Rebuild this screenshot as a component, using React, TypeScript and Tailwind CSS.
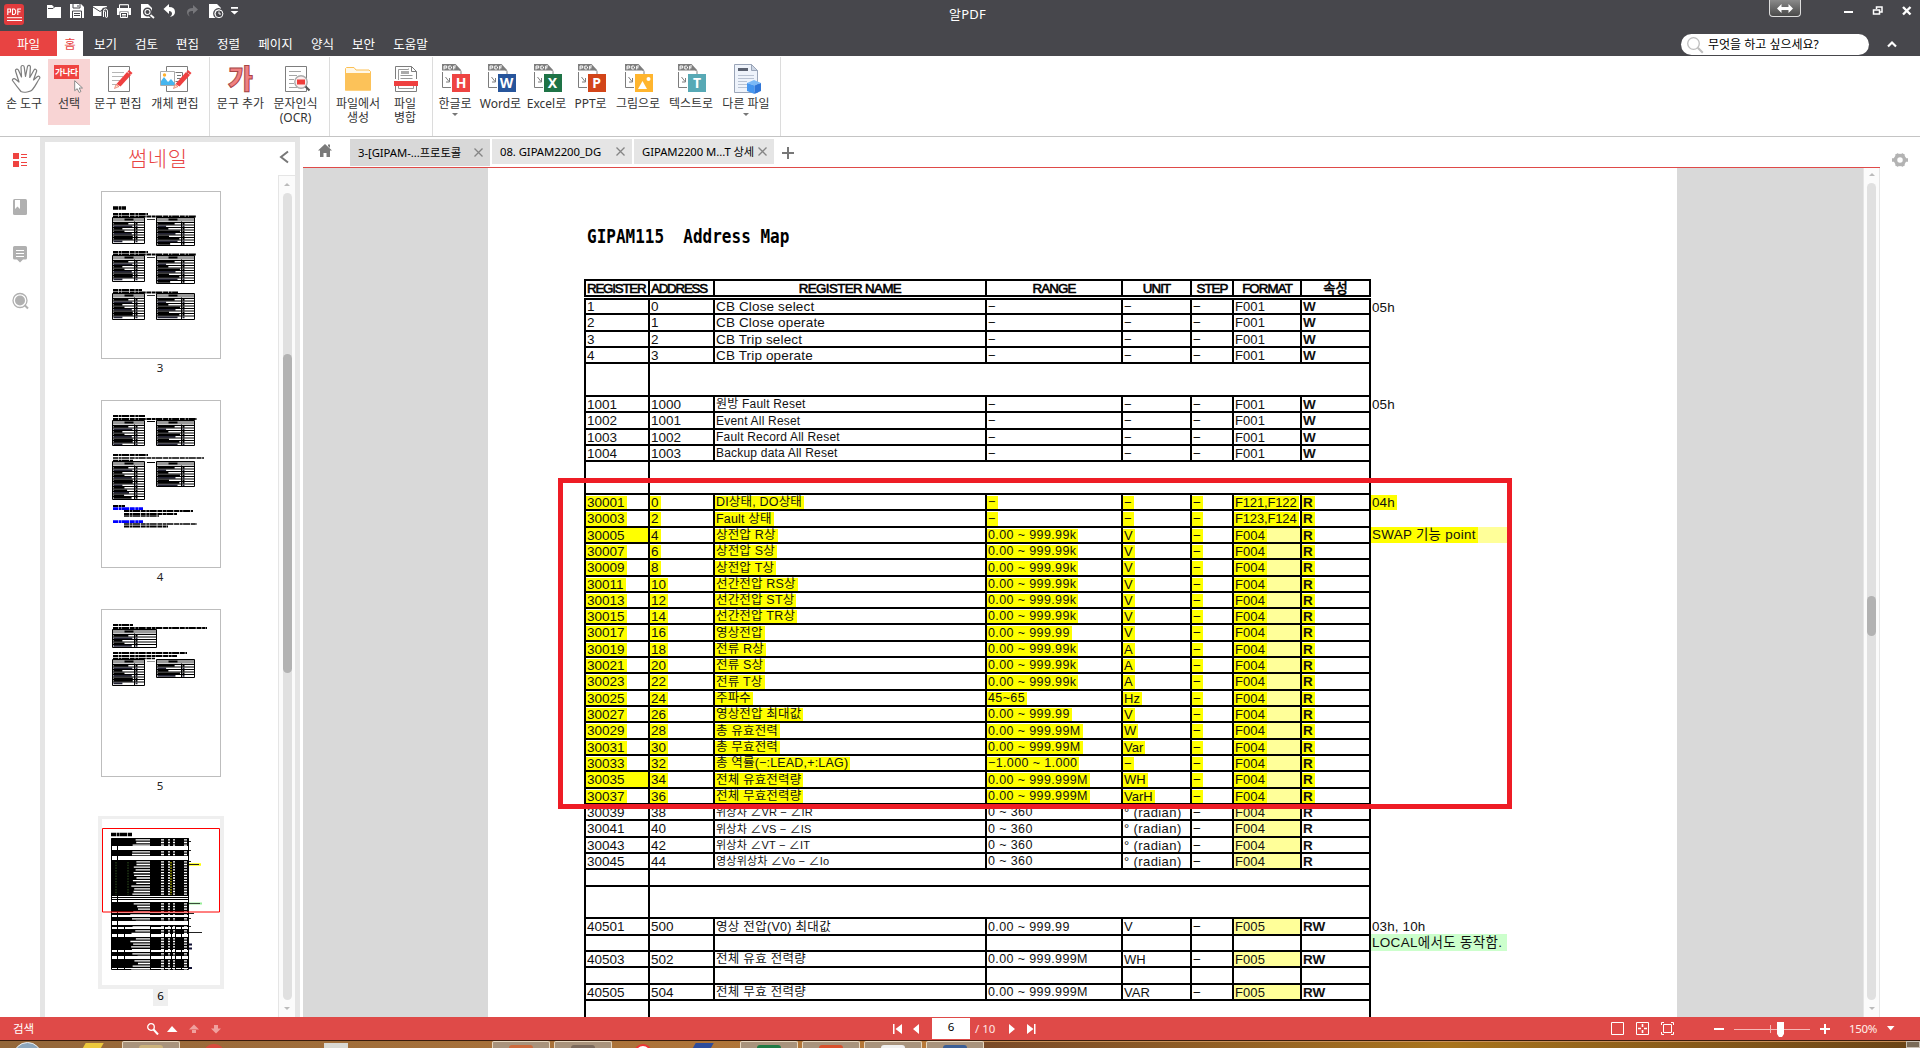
import React from "react";

const UI = "font-['Noto_Sans','Noto_Sans_CJK_KR',sans-serif]";
const DOC = "font-['Liberation_Sans','Noto_Sans_CJK_KR',sans-serif]";

/* ---------- quick access icons ---------- */

function QuickIcons() {
  const w = "#fff";
  return (
    <div className="flex items-center h-[23px] pl-[23px] gap-[8px]">
      <svg width="15" height="15" viewBox="0 0 15 15"><path d="M0 1h5l2 2h7v11H0z" fill={w} /><path d="M1 4.5h5l2-2" stroke="#47474c" fill="none" /></svg>
      <svg width="15" height="15" viewBox="0 0 15 15"><path d="M0 0h11l3 3v11H0z" fill={w} /><path d="M3 0v4h7V0M2.500 14V7h9v7M4 9.500h6M4 11.500h6" stroke="#47474c" fill="none" /><path d="M8 1v2" stroke="#47474c" /></svg>
      <svg width="16" height="15" viewBox="0 0 16 15"><path d="M0 2h14v10H0z" fill={w} /><path d="M0 3l7 4.500L14 3" stroke="#47474c" fill="none" /><path d="M10 14V7q0-2 2-2t2 2v5q0 2-1.500 2T11.500 12V8" stroke="#47474c" strokeWidth="3" fill="none" /><path d="M10.500 13V7q0-2 2-2t2 2v5q0 1.500-1 1.500T12.500 12V8" stroke={w} fill="none" /></svg>
      <svg width="15" height="15" viewBox="0 0 15 15"><path d="M2.500 4V.5h9V4M0 4h14v7h-2.500V7.500h-9V11H0z" fill={w} /><path d="M3 1h8v3H3z" fill="#47474c" /><path d="M3.500 8.500h7v5h-7zM5 10.500h4M5 12h4M2.500 4V.8h9V4" stroke={w} fill="none" /></svg>
      <svg width="15" height="15" viewBox="0 0 15 15"><path d="M1 0h7l4 4v10H1z" fill={w} /><circle cx="7.500" cy="8" r="3.800" fill="#fff" stroke="#47474c" strokeWidth="1.500" /><circle cx="7.500" cy="8" r="2" fill="#47474c" /><path d="M10 10.500l4 4" stroke="#47474c" strokeWidth="4" /><path d="M10.500 11l3.500 3" stroke={w} strokeWidth="1.800" /></svg>
      <svg width="15" height="15" viewBox="0 0 15 15"><path d="M6 0v3q6 0 6 5 0 4-5 5 2.500-2 2-4T6 7v3L.5 5z" fill={w} /></svg>
      <svg width="15" height="15" viewBox="0 0 15 15"><path d="M7 1l5 4.500L7 10V7Q2.500 6.500 2.500 9.500q0 1.500 1.500 3Q1 11 1 8q.3-4 6-4z" fill="#77777b" /></svg>
      <svg width="16" height="15" viewBox="0 0 16 15"><path d="M0 0h8l4 4v10H0z" fill={w} /><circle cx="9.500" cy="9.500" r="4.700" fill={w} stroke="#47474c" strokeWidth="1.400" /><circle cx="10" cy="9.800" r="3.900" fill="#47474c" stroke={w} /><path d="M10 7.500v2.500h2" stroke={w} fill="none" /></svg>
      <svg className="ml-[-3px]" width="9" height="15" viewBox="0 0 9 15"><path d="M1 3h7v1.700H1zM.6 7H8.400L4.500 10.500z" fill={w} /></svg>
    </div>
  );
}

function AppLogo() {
  return (
    <div className="ml-[4px] mt-[4px] flex h-[21px] w-[20px] flex-col items-center rounded-[3px] bg-[#e23b3d] pt-[4px]">
      <svg width="15" height="14" viewBox="0 0 15 14" fill="none" stroke="#fff" strokeWidth="1.100">
        <path d="M.8 7V1h2.700v3H1M5.500 1v5.500h1.800L8.600 5V2.500L7.300 1zM10.800 7V1H14M10.800 3.800h2.700" />
        <path d="M0 9.700h15M0 12.500h15" strokeWidth="1" />
      </svg>
    </div>
  );
}

/* ---------- ribbon icons ---------- */

const Pencil = () => (
  <g>
    <path d="M10.500 19L21 7l4 3L14.500 21.500z" fill="#ef4040" />
    <path d="M21.500 6.500l1.500-1.500 3.500 3-1.500 1.700z" fill="#ef4040" />
    <path d="M10 19.500L8.500 23.500l4.500-2z" fill="#ffe0c8" stroke="#e06050" strokeWidth=".6" />
  </g>
);

const icons: Record<string, React.ReactNode> = {
  hand: (
    <svg className="ml-[3px]" width="30" height="30" viewBox="0 0 30 30" fill="none" stroke="#7d7d7d" strokeWidth="1.200" strokeLinejoin="round">
      <path d="M10 27.500C7 24 4 20 1.500 16.500c-.5-1.500 1.500-2.500 3-1.300L8 18 4.500 7c-.3-2 2.200-2.700 3-.8L10.500 13 10 3c.2-2 3-2 3.200 0L14.500 12.500 16.500 2.500c.5-1.700 3-1.300 2.900.5L18.800 13.500 23 6c1-1.500 3-.5 2.600 1.300L22.500 16l4-3.500c1.500-1 3 .6 2 2C26 18 24.500 22 21.500 25.500c-1.500 2.500-9 3.500-11.500 2z" />
    </svg>
  ),
  select: (
    <div className="relative h-[30px] w-[30px]">
      <div className="mt-px h-[14px] w-[25px] whitespace-nowrap bg-[#ef4340] text-center text-[8.500px] font-bold leading-[13px] tracking-[-0.100px] text-white">가나다</div>
      <svg className="absolute left-[20px] top-[16px]" width="10" height="13" viewBox="0 0 10 13"><path d="M.7.700v10l2.500-2 2 3.800 1.700-1-1.700-3.500h3.300z" fill="#fff" stroke="#888" /></svg>
    </div>
  ),
  edit: (
    <svg className="ml-[3px]" width="28" height="28" viewBox="0 0 28 28"><path d="M2.500 1.500h21v25h-21z" fill="#fff" stroke="#7d7d7d" /><path d="M6 7.500h12M6 11.500h11M6 15.500h8M6 19.500h5" stroke="#b5b5b5" /><Pencil /></svg>
  ),
  object: (
    <svg className="ml-[2px]" width="34" height="28" viewBox="0 0 34 28"><path d="M7.500 1.500h21v25h-21z" fill="#fff" stroke="#7d7d7d" /><path d="M1.500 6.500h14v14h-14z" fill="#fff" stroke="#aaa" /><path d="M18 10.500h4M18 13.500h4M16.500 7.500h7v9h-7" stroke="#777" fill="none" /><path d="M2 20v-4l3-4 4 5 3-3 3.500 4v2z" fill="#46b5ee" /><circle cx="5.500" cy="10" r="1.700" fill="#ffb02c" /><g transform="translate(6 0)"><Pencil /></g></svg>
  ),
  ga: (
    <div className="flex h-[28px] items-center text-[27px] font-black leading-[28px] text-[#f08080] [-webkit-text-stroke:1px_#a64646]">가</div>
  ),
  ocr: (
    <svg className="ml-[2px]" width="28" height="28" viewBox="0 0 28 28"><path d="M2.500 1.500h21v25h-21z" fill="#fff" stroke="#7d7d7d" /><path d="M6 6.500h12M6 10.500h8M6 14.500h5M6 18.500h5M6 22.500h8" stroke="#a5a5a5" /><circle cx="18" cy="17" r="6.200" fill="#fbeeee" stroke="#ababab" strokeWidth="1.400" /><path d="M14 14.500h8v5h-8z" fill="#ef3d3a" /><path d="M22.500 21.500l4 4" stroke="#555" strokeWidth="2.200" /></svg>
  ),
  folder: (
    <svg width="28" height="28" viewBox="0 0 28 28"><path d="M1.500 25V3.500l1-1H10l2 2.500h13l1.500 1.500V25z" fill="#fff8e8" stroke="#fcc055" /><path d="M1 8h26v17.500H1z" fill="#fcc259" /></svg>
  ),
  merge: (
    <svg className="ml-[2px]" width="28" height="28" viewBox="0 0 28 28"><path d="M3.500 14V1.500h16l5 5V14M3.500 20v6.500h21V20M19.500 1.500v5h5" fill="none" stroke="#7d7d7d" /><path d="M6.500 15V4.500h10v-1M6.500 20v3.500h15V20M8.500 10.500h12M8.500 13.500h12" fill="none" stroke="#999" /><path d="M9 6h8v3H9z" fill="#aaa" /><path d="M2 16h24v5H2z" fill="#ef4040" /></svg>
  ),
  cube: (
    <svg className="ml-[2px]" width="28" height="32" viewBox="0 0 28 32"><path d="M1.500 1.500h17l6 6v22h-23z" fill="#eef3fb" stroke="#9aa5b8" /><path d="M18.500 1.500v6h6z" fill="#cdd6e4" stroke="#9aa5b8" /><path d="M5 5h10v3H5z" fill="#5a6170" /><path d="M5 12.500h16M5 15.500h16M5 18.500h9M5 21.500h9M5 24.500h9" stroke="#b9c3d3" /><path d="M14 20l7-3 7 3-6.500 2.500z" fill="#7ab9f7" /><path d="M14 20l7.500 2.500V31L14 28z" fill="#4596ef" /><path d="M21.500 22.500L28 20v8l-6.500 3z" fill="#2f76d8" /></svg>
  ),
};

function ExportIcon({ color, letter }: { color: string; letter?: string }) {
  return (
    <div className="relative ml-[3px] mt-[-2px] h-[30px] w-[29px]">
      <svg width="29" height="30" viewBox="0 0 29 30" fill="none" stroke="#7d7d7d">
        <path d="M.5 9v15.500H9M13 2.500l6 6V11" />
        <path d="M0 1h13.500l6 6.500H0z" fill="#7d7d7d" stroke="none" />
        <path d="M2 6.500V3h2.700v2H2M6.800 3v3h1.700l1-.9V3.900L8.500 3zM11.700 6.500V3H14M11.700 4.800h1.800" stroke="#fff" />
        <path d="M3.500 14l3.500 4.500M7.500 15v4H4" />
        <path d="M10 11h18v18H10z" fill={color} stroke="none" />
        {!letter && <path d="M13 26l4.500-8 4.500 8z" fill="#fff" stroke="none" />}
        {!letter && <circle cx="23.500" cy="16" r="2" fill="#fff" stroke="none" />}
      </svg>
      {letter && <span className="absolute left-[10px] top-[11px] w-[18px] text-center font-['Noto_Sans'] text-[14px] font-bold leading-[18px] text-white">{letter}</span>}
    </div>
  );
}

function Tool({ w, icon, label, arrow, on }: { w: string; icon: React.ReactNode; label: string[]; arrow?: boolean; on?: boolean }) {
  return (
    <div className={`${w} ${on ? "bg-[#f8d4d4]" : ""} mt-[3px] flex h-[66px] shrink-0 flex-col items-center whitespace-nowrap text-[12px] leading-[14px] text-[#333]`}>
      <div className="flex h-[38px] items-center pt-[2px]">{icon}</div>
      {label.map((l) => <div key={l}>{l}</div>)}
      {arrow && <div className="mt-[2px] h-0 w-0 border-x-[3px] border-t-[3px] border-x-transparent border-t-[#777]" />}
    </div>
  );
}

const Sep = ({ m }: { m: string }) => <div className={`${m} mt-[1px] h-[79px] w-px shrink-0 bg-[#dcdcdc]`} />;

function Ribbon() {
  return (
    <div className="flex h-[81px] items-start border-b border-[#c4c4c4] bg-white">
      <Tool w="w-[48px]" icon={icons.hand} label={["손 도구"]} />
      <Tool w="w-[42px]" icon={icons.select} label={["선택"]} on />
      <Tool w="w-[56px]" icon={icons.edit} label={["문구 편집"]} />
      <Tool w="w-[58px]" icon={icons.object} label={["개체 편집"]} />
      <Sep m="ml-[5px]" />
      <Tool w="w-[61px]" icon={icons.ga} label={["문구 추가"]} />
      <Tool w="w-[49px]" icon={icons.ocr} label={["문자인식", "(OCR)"]} />
      <Sep m="ml-[9px]" />
      <Tool w="w-[56px]" icon={icons.folder} label={["파일에서", "생성"]} />
      <Tool w="w-[38px]" icon={icons.merge} label={["파일", "병합"]} />
      <Sep m="ml-[8px]" />
      <Tool w="w-[44px]" icon={<ExportIcon color="#ee4442" letter="H" />} label={["한글로"]} arrow />
      <Tool w="w-[47px]" icon={<ExportIcon color="#27559b" letter="W" />} label={["Word로"]} />
      <Tool w="w-[45px]" icon={<ExportIcon color="#1e7346" letter="X" />} label={["Excel로"]} />
      <Tool w="w-[43px]" icon={<ExportIcon color="#d24519" letter="P" />} label={["PPT로"]} />
      <Tool w="w-[52px]" icon={<ExportIcon color="#ffb52e" />} label={["그림으로"]} />
      <Tool w="w-[54px]" icon={<ExportIcon color="#57a9b5" letter="T" />} label={["텍스트로"]} />
      <Tool w="w-[56px]" icon={icons.cube} label={["다른 파일"]} arrow />
      <Sep m="ml-[6px]" />
    </div>
  );
}

/* ---------- header ---------- */

const menus: [string, string][] = [
  ["보기", "w-[41px]"], ["검토", "w-[41px]"], ["편집", "w-[41px]"], ["정렬", "w-[41px]"], ["페이지", "w-[53px]"],
  ["양식", "w-[41px]"], ["보안", "w-[41px]"], ["도움말", "w-[53px]"],
];

function Header() {
  return (
    <div className="relative h-[56px] bg-[#47474c] text-white">
      <div className="flex h-[31px]">
        <AppLogo />
        <QuickIcons />
        <div className="ml-auto flex items-start">
          <div className="mr-[43px] flex h-[17px] w-[32px] items-center justify-center rounded-b-[4px] border border-t-0 border-[#ddd] bg-gradient-to-b from-[#8a8a8a] to-[#4a4a4a]">
            <svg width="16" height="9" viewBox="0 0 16 9"><path d="M0 4.500L4.500 0v3h7V0L16 4.500 11.500 9V6h-7v3z" fill="#fff" /></svg>
          </div>
          <svg className="mt-[5px]" width="76" height="12" viewBox="0 0 76 12">
            <path d="M0 6h9v2H0z" fill="#fff" />
            <path d="M32.500 4V2h5.500v5h-2M29.500 5h6v4h-6z" fill="none" stroke="#fff" strokeWidth="1.500" />
            <path d="M59 2l7.500 7.500M66.500 2L59 9.500" stroke="#fff" strokeWidth="2.400" />
          </svg>
        </div>
      </div>
      <div className="absolute left-[949px] top-[5px] text-[13px] leading-[18px] tracking-[0.200px]">알PDF</div>
      <div className="flex h-[25px] text-[12.5px] leading-[27px]">
        <div className="w-[57px] bg-[#e84342] text-center">파일</div>
        <div className="w-[26px] bg-white text-center text-[#e84342]">홈</div>
        <div className="w-[2px]" />
        {menus.map(([t, w]) => <div key={t} className={`${w} text-center`}>{t}</div>)}
        <div className="ml-auto mt-[3px] flex h-[21px] w-[188px] items-center rounded-full bg-white pl-[5px] text-black">
          <svg width="18" height="18" viewBox="0 0 18 18" fill="none" stroke="#bdbdbd"><circle cx="7.500" cy="7.500" r="5.800" strokeWidth="1.300" /><path d="M11.800 11.800l5 5" strokeWidth="2" /></svg>
          <span className="ml-[4px] text-[12px] leading-[20px]">무엇을 하고 싶으세요?</span>
        </div>
        <svg className="ml-[18px] mr-[23px] mt-[9px]" width="10" height="8" viewBox="0 0 10 8"><path d="M1 6.500l4-4 4 4" fill="none" stroke="#fff" strokeWidth="2.200" /></svg>
      </div>
    </div>
  );
}

/* ---------- sidebar ---------- */

function Rail() {
  return (
    <div className="flex w-[40px] flex-col items-center bg-white pt-[15px]">
      <svg width="16" height="16" viewBox="0 0 16 16"><path d="M1 1h6v6H1zM1 9h6v6H1z" fill="#ef4340" /><path d="M9 2.500h6M9 5.500h6M9 10.500h6M9 13.500h6" stroke="#ef4340" /></svg>
      <svg className="mt-[31px]" width="16" height="16" viewBox="0 0 16 16"><rect x="1" width="14" height="16" rx="1.500" fill="#b0b0b0" /><path d="M3 1h5v9L5.500 7.500 3 10z" fill="#fff" /></svg>
      <svg className="mt-[31px]" width="16" height="17" viewBox="0 0 16 17"><path d="M1 1.500Q1 0 2.500 0h11Q15 0 15 1.500V12q0 1.500-1.500 1.500H11L8 16.500 5 13.500H2.500Q1 13.500 1 12z" fill="#b0b0b0" /><path d="M4 4.500h8M4 7.500h8M4 10.500h8" stroke="#fff" /></svg>
      <svg className="mt-[29px]" width="17" height="18" viewBox="0 0 17 18"><circle cx="8" cy="8.500" r="7" fill="none" stroke="#b0b0b0" strokeWidth="1.300" /><circle cx="8" cy="8.500" r="5" fill="#b0b0b0" /><path d="M12.500 13l3.500 3.500" stroke="#b0b0b0" strokeWidth="2" /></svg>
    </div>
  );
}

function noise(n: number) {
  const v = Math.sin(n * 127.1) * 43758.5;
  return v - Math.floor(v);
}

function MiniTable({ x, y, w, h, c }: { x: number; y: number; w: number; h: number; c: number }) {
  const rows = Math.floor((h - 5) / 2.5);
  return (
    <g>
      <path d={`M${x} ${y}h${w}v4h-${w}z`} fill="#999" />
      <path d={`M${x + 12} ${y + 1}h9v2h-9z`} fill="#000" />
      {Array.from({ length: rows }, (_, i) => (
        <g key={i}>
          <path d={`M${x} ${y + 5 + i * 2.5}h${w}`} stroke="#000" strokeWidth="1" />
          <path d={`M${x + 1} ${y + 6.3 + i * 2.5}h${8 + noise(i + x) * (c - 10)}M${x + c + 1} ${y + 6.3 + i * 2.500}h2`} stroke={i % 3 === 1 ? "#223" : "#000"} strokeWidth="1.800" />
        </g>
      ))}
      <path d={`M${x} ${y}h${w}v${h}h-${w}zM${x + c} ${y + 4}v${h - 4}`} fill="none" stroke="#000" strokeWidth="1" />
    </g>
  );
}

const Blur = ({ x, y, w, c = "#000", s = 2 }: { x: number; y: number; w: number; c?: string; s?: number }) => (
  <path d={`M${x} ${y}h${w}`} stroke={c} strokeWidth={s} strokeDasharray="5 .6 3 .4 7 .7" />
);

function Page3() {
  return (
    <svg width="118" height="166" viewBox="0 0 118 166">
      <Blur x={11} y={16} w={13} s={3.5} />
      {[23, 61, 99].map((y, i) => (
        <g key={y}>
          <Blur x={11} y={y - 1} w={i === 2 ? 29 : 35} />
          <Blur x={11} y={y + 1.500} w={i === 2 ? 65 : 83} />
          <MiniTable x={10.500} y={y + 2.500} w={32} h={26} c={22} />
          <path d={`M45 ${y + 4.500}h8`} stroke="#000" strokeWidth=".8" />
          <MiniTable x={54.500} y={y + 2.500} w={38} h={i === 2 ? 26 : 28} c={25} />
        </g>
      ))}
    </svg>
  );
}

function Page4() {
  return (
    <svg width="118" height="166" viewBox="0 0 118 166">
      <Blur x={11} y={15} w={32} /><Blur x={11} y={18} w={84} />
      <MiniTable x={10.500} y={19.500} w={32} h={25} c={22} /><path d="M45 20.500h8" stroke="#000" />
      <MiniTable x={54.500} y={19.500} w={38} h={25} c={25} />
      <Blur x={11} y={54} w={35} /><Blur x={11} y={57} w={91} s={1.5} /><Blur x={11} y={59.500} w={20} s={1.5} />
      <MiniTable x={10.500} y={60.500} w={32} h={38} c={22} /><path d="M45 61.500h8" stroke="#000" />
      <MiniTable x={54.500} y={60.500} w={38} h={25} c={25} />
      <Blur x={11} y={105} w={12} /><Blur x={11} y={107.700} w={30} c="#00f" s={2.8} />
      <Blur x={22} y={110} w={69} /><Blur x={22} y={113} w={53} /><Blur x={22} y={115} w={35} s={1.5} />
      <Blur x={11} y={120.700} w={30} c="#00f" s={2.8} /><Blur x={22} y={123} w={73} s={1.7} /><Blur x={22} y={125.500} w={44} />
    </svg>
  );
}

function Page5() {
  return (
    <svg width="118" height="166" viewBox="0 0 118 166">
      <Blur x={11} y={15} w={20} /><Blur x={11} y={18} w={94} />
      <MiniTable x={10.500} y={19.500} w={44} h={18} c={22} />
      <Blur x={11} y={43} w={74} /><Blur x={11} y={46} w={64} /><Blur x={11} y={48.500} w={42} s={1.5} />
      <MiniTable x={10.500} y={49.500} w={32} h={26} c={22} /><path d="M45 51.500h8" stroke="#999" />
      <MiniTable x={54.500} y={49.500} w={38} h={18} c={25} />
    </svg>
  );
}

const mapBands = [[19, 8], [31, 6], [41, 36], [83, 10], [94, 2], [98, 4], [106, 2], [110, 5], [118, 13], [133, 4], [140, 9]];

function Page6() {
  return (
    <svg width="118" height="166" viewBox="0 0 118 166">
      <Blur x={9} y={15.500} w={21} s={3.5} />
      <path d="M9.500 19.500h77v131h-77zM15.500 27v123M22.500 106v44M48.500 106v44M62.500 106v44M69.500 106v44M73.500 106v44M79.500 106v44" fill="none" stroke="#000" />
      {mapBands.map(([y, h]) => (
        <g key={y}>
          <path d={`M9.500 ${y}h77v${h}h-77z`} fill="#000" />
          {Array.from({ length: Math.ceil(h / 2.700) }, (_, i) => (
            <path key={i} d={`M${28 + noise(i + y) * 8} ${y + 1.800 + i * 2.700}H48M59 ${y + 1.800 + i * 2.700}h3M66 ${y + 1.800 + i * 2.700}h2M71 ${y + 1.800 + i * 2.700}h2M82 ${y + 1.800 + i * 2.700}h3`} stroke="#fff" strokeWidth="1.300" />
          ))}
        </g>
      ))}
      <path d="M9.500 78.500h77M9.500 80.500h77" stroke="#000" />
      <path d="M69 43v33" stroke="#ff0" strokeWidth="1" strokeDasharray="1.500 1.200" />
      <path d="M14 43v33M26 43v33" stroke="#352" strokeDasharray="1.500 1.200" />
      <path d="M87 45.500h12" stroke="#ff0" strokeWidth="2.500" /><path d="M87 45.500h10M87 22.500h2M87 31.500h2M87 42.500h2M87 94.500h5M87 99.500h2M87 107.500h2M87 113.500h13" stroke="#222" strokeWidth="1" />
      <path d="M87 84.500h13" stroke="#9e9" strokeWidth="2" /><path d="M87 84.500h11" stroke="#222" strokeWidth=".8" />
      <path d="M87 125.500h3M87 129.500h3M87 149h3" stroke="#113" strokeWidth="2" />
      <path d="M.5 9.500h117v83.500H.5z" fill="none" stroke="#f00" />
    </svg>
  );
}

function Thumb({ n, children }: { n: number; children: React.ReactNode }) {
  return (
    <div className="flex h-[209px] flex-col items-center">
      <div className="h-[168px] w-[120px] shrink-0 border border-[#bdbdbd] bg-white">{children}</div>
      <div className="mr-[2px] mt-[1px] text-[11.5px] leading-[16px] text-[#222]">{n}</div>
    </div>
  );
}

function ScrollArrow({ up }: { up?: boolean }) {
  return up
    ? <div className="h-0 w-0 border-x-[3px] border-b-[3px] border-x-transparent border-b-[#bbb]" />
    : <div className="h-0 w-0 border-x-[3px] border-t-[3px] border-x-transparent border-t-[#bbb]" />;
}

function SidePanel() {
  return (
    <div className="flex w-[260px] flex-col border-x-[5px] border-t-[5px] border-[#e5e5e5] bg-white">
      <div className="flex h-[33px] shrink-0 items-center">
        <div className="ml-[83px] text-[21px] font-light leading-[33px] tracking-[0.500px] text-[#e84342]">썸네일</div>
        <svg className="ml-auto mr-[6px] mt-[-3px]" width="10" height="14" viewBox="0 0 10 14"><path d="M9 1.500L2 7l7 5.500" fill="none" stroke="#777" strokeWidth="2" /></svg>
      </div>
      <div className="flex min-h-0 flex-1">
        <div className="ml-[53px] w-[126px] pt-[16px]">
          <Thumb n={3}><Page3 /></Thumb>
          <Thumb n={4}><Page4 /></Thumb>
          <Thumb n={5}><Page5 /></Thumb>
          <div className="mt-[-2px] flex flex-col items-center">
            <div className="h-[173px] w-[126px] border-4 border-t-[3px] border-[#efefef] bg-white"><Page6 /></div>
            <div className="mr-[1px] h-[17px] w-[15px] bg-[#efefef] text-center text-[11.5px] leading-[13px]">6</div>
          </div>
        </div>
        <div className="ml-auto flex w-[17px] flex-col items-center border-l border-t border-[#e5e5e5] bg-[#fbfbfb] py-[7px]">
          <ScrollArrow up />
          <div className="my-[7px] w-[9px] flex-1 rounded-full bg-[#e0e0e0] pt-[161px]">
            <div className="h-[319px] w-[9px] rounded-full bg-[#b2b2b2]" />
          </div>
          <ScrollArrow />
        </div>
      </div>
    </div>
  );
}

/* ---------- document ---------- */

function Tab({ label, active }: { label: string; active?: boolean }) {
  return (
    <div className={`${active ? "h-[27px] bg-[#d8d8d8]" : "h-[25px] bg-[#e5e5e5]"} flex w-[140px] items-center pl-[8px] text-[11.3px] tracking-[-0.050px] text-black`}>
      <span className="whitespace-nowrap leading-[20px]">{label}</span>
      <svg className="ml-auto mr-[7px]" width="9" height="9" viewBox="0 0 9 9"><path d="M.5.500l8 8M8.500.500l-8 8" stroke="#858585" strokeWidth="1.300" /></svg>
    </div>
  );
}

type Row = { h: number; c?: string[]; k?: "cb" | "sm" | "hl" | "ang" | "rw"; note?: string };

const V = "0.00 ~ 999.99k";
const rows: Row[] = [
  { h: 15, c: ["1", "0", "CB Close select", "−", "−", "−", "F001", "W"], k: "cb", note: "05h" },
  { h: 17, c: ["2", "1", "CB Close operate", "−", "−", "−", "F001", "W"], k: "cb" },
  { h: 16, c: ["3", "2", "CB Trip select", "−", "−", "−", "F001", "W"], k: "cb" },
  { h: 16, c: ["4", "3", "CB Trip operate", "−", "−", "−", "F001", "W"], k: "cb" },
  { h: 33 },
  { h: 16, c: ["1001", "1000", "원방 Fault Reset", "−", "−", "−", "F001", "W"], k: "sm", note: "05h" },
  { h: 17, c: ["1002", "1001", "Event All Reset", "−", "−", "−", "F001", "W"], k: "sm" },
  { h: 16, c: ["1003", "1002", "Fault Record All Reset", "−", "−", "−", "F001", "W"], k: "sm" },
  { h: 16, c: ["1004", "1003", "Backup data All Reset", "−", "−", "−", "F001", "W"], k: "sm" },
  { h: 33 },
  { h: 16, c: ["30001", "0", "DI상태, DO상태", "−", "−", "−", "F121,F122", "R"], k: "hl", note: "04h" },
  { h: 17, c: ["30003", "2", "Fault 상태", "−", "−", "−", "F123,F124", "R"], k: "hl" },
  { h: 16, c: ["30005", "4", "상전압 R상", V, "V", "−", "F004", "R"], k: "hl", note: "SWAP 기능 point" },
  { h: 16, c: ["30007", "6", "상전압 S상", V, "V", "−", "F004", "R"], k: "hl" },
  { h: 17, c: ["30009", "8", "상전압 T상", V, "V", "−", "F004", "R"], k: "hl" },
  { h: 16, c: ["30011", "10", "선간전압 RS상", V, "V", "−", "F004", "R"], k: "hl" },
  { h: 16, c: ["30013", "12", "선간전압 ST상", V, "V", "−", "F004", "R"], k: "hl" },
  { h: 16, c: ["30015", "14", "선간전압 TR상", V, "V", "−", "F004", "R"], k: "hl" },
  { h: 17, c: ["30017", "16", "영상전압", "0.00 ~ 999.99", "V", "−", "F004", "R"], k: "hl" },
  { h: 16, c: ["30019", "18", "전류 R상", V, "A", "−", "F004", "R"], k: "hl" },
  { h: 16, c: ["30021", "20", "전류 S상", V, "A", "−", "F004", "R"], k: "hl" },
  { h: 17, c: ["30023", "22", "전류 T상", V, "A", "−", "F004", "R"], k: "hl" },
  { h: 16, c: ["30025", "24", "주파수", "45~65", "Hz", "−", "F004", "R"], k: "hl" },
  { h: 16, c: ["30027", "26", "영상전압 최대값", "0.00 ~ 999.99", "V", "−", "F004", "R"], k: "hl" },
  { h: 17, c: ["30029", "28", "총 유효전력", "0.00 ~ 999.99M", "W", "−", "F004", "R"], k: "hl" },
  { h: 16, c: ["30031", "30", "총 무효전력", "0.00 ~ 999.99M", "Var", "−", "F004", "R"], k: "hl" },
  { h: 16, c: ["30033", "32", "총 역률(−:LEAD,+:LAG)", "−1.000 ~ 1.000", "−", "−", "F004", "R"], k: "hl" },
  { h: 17, c: ["30035", "34", "전체 유효전력량", "0.00 ~ 999.999M", "WH", "−", "F004", "R"], k: "hl" },
  { h: 16, c: ["30037", "36", "전체 무효전력량", "0.00 ~ 999.999M", "VarH", "−", "F004", "R"], k: "hl" },
  { h: 16, c: ["30039", "38", "위상차 ∠VR − ∠IR", "0 ~ 360", "° (radian)", "−", "F004", "R"], k: "ang" },
  { h: 17, c: ["30041", "40", "위상차 ∠VS − ∠IS", "0 ~ 360", "° (radian)", "−", "F004", "R"], k: "ang" },
  { h: 16, c: ["30043", "42", "위상차 ∠VT − ∠IT", "0 ~ 360", "° (radian)", "−", "F004", "R"], k: "ang" },
  { h: 16, c: ["30045", "44", "영상위상차 ∠Vo − ∠Io", "0 ~ 360", "° (radian)", "−", "F004", "R"], k: "ang" },
  { h: 17 },
  { h: 32 },
  { h: 17, c: ["40501", "500", "영상 전압(V0) 최대값", "0.00 ~ 999.99", "V", "−", "F005", "RW"], k: "rw", note: "03h, 10h" },
  { h: 16, c: ["", "", "", "", "", "", "", ""], note: "LOCAL에서도 동작함." },
  { h: 16, c: ["40503", "502", "전체 유효 전력량", "0.00 ~ 999.999M", "WH", "−", "F005", "RW"], k: "rw" },
  { h: 17, c: ["", "", "", "", "", "", "", ""] },
  { h: 16, c: ["40505", "504", "전체 무효 전력량", "0.00 ~ 999.999M", "VAR", "−", "F005", "RW"], k: "rw" },
  { h: 18 },
];

const rowHeight: Record<number, string> = {
  15: "h-[15px]", 16: "h-[16px]", 17: "h-[17px]", 18: "h-[18px]", 32: "h-[32px]", 33: "h-[33px]",
};

const nameStyle: Record<string, string> = {
  cb: "text-[13.5px] tracking-[0.150px]",
  sm: "text-[12px] tracking-[0.200px]",
  hl: "text-[12.5px] tracking-[0.180px]",
  ang: "text-[11px] tracking-[0.200px]",
  rw: "text-[12.5px] tracking-[0.300px]",
};

const GRID = "grid grid-cols-[64px_65px_272px_136px_69px_42px_68px_71px_150px]";

function Cell({ text, i, row }: { text: string; i: number; row: Row }) {
  const hl = row.k === "hl";
  const full = i === 0 && (text === "30005" || text === "30035");
  const pale = i === 6 && (text === "F004" || text === "F005");
  let size = "text-[13.5px]";
  if (i === 2) size = nameStyle[row.k ?? "cb"];
  if (i === 3) size = hl || row.k === "ang" || row.k === "rw" ? "text-[12.5px] tracking-[0.380px]" : "text-[13px]";
  if (i === 4) size = row.k === "ang" ? "text-[13px] tracking-[0.400px]" : "text-[13px]";
  if (i === 6) size = text.length > 4 ? "text-[13px] tracking-[-0.150px]" : "text-[13px] tracking-[0.100px]";
  if (i === 7) size = "text-[13.5px] font-bold";
  return (
    <div className={`border-l-2 border-t-2 border-black ${i === 7 ? "border-r-2" : ""} ${full ? "bg-[#ff0]" : pale ? "bg-[#ffff99]" : ""} flex min-w-0`}>
      {text && (
        <span className={`${size} ${hl ? "bg-[#ff0]" : ""} ${row.h === 15 ? "leading-[14px]" : row.h === 17 ? "mt-px leading-[14px]" : "mt-px leading-[13px]"} whitespace-pre pl-[1px] pr-[2px]`}>{text}</span>
      )}
    </div>
  );
}

const heads = ["REGISTER", "ADDRESS", "REGISTER NAME", "RANGE", "UNIT", "STEP", "FORMAT", "속성"];

function Note({ text }: { text: string }) {
  if (text.startsWith("SWAP"))
    return <div className="mt-px w-[136px] bg-[#ffff99] text-[13.4px] leading-[16px] tracking-[0.300px]"><span className="inline-block bg-[#ff0] pl-px pr-[2px]">{text}</span></div>;
  if (text.startsWith("LOCAL"))
    return <div className="w-[136px] whitespace-nowrap bg-[#ccffcc] pl-px text-[13.5px] leading-[17px] tracking-[0.300px]">{text}</div>;
  return <div className="mt-[2px] flex text-[13.4px] leading-[15px] tracking-[0.150px]"><span className={`${text === "04h" ? "bg-[#ff0]" : ""} pl-px pr-[2px]`}>{text}</span></div>;
}

function DocPage() {
  return (
    <div className={`${DOC} relative w-[1189px] overflow-hidden bg-white pl-[96px] text-[#111]`}>
      <div className="h-[111px] whitespace-pre pl-[3px] pt-[59px] font-['DejaVu_Sans_Mono'] text-[16px] font-bold leading-[20px] text-black">
        <div className="inline-block origin-center scale-y-[1.200]">GIPAM115  Address Map</div>
      </div>
      <div className={`${GRID} h-[19px]`}>
        {heads.map((t, i) => (
          <div key={t} className={`h-[18px] border-y-2 border-l-2 border-black ${i === 7 ? "border-r-2" : ""} ${i < 2 ? "pl-px text-left" : "text-center"} ${i === 2 ? "tracking-[-0.600px]" : i < 2 ? "tracking-[-1.200px]" : i === 7 ? "tracking-normal" : "tracking-[-0.900px]"} whitespace-nowrap text-[13.3px] leading-[16px] text-black [-webkit-text-stroke:0.600px_black]`}>{t}</div>
        ))}
      </div>
      {rows.map((r, ri) =>
        r.c ? (
          <div key={ri} className={`${GRID} ${rowHeight[r.h]}`}>
            {r.c.map((t, i) => <Cell key={i} text={t} i={i} row={r} />)}
            {r.note && <Note text={r.note} />}
          </div>
        ) : (
          <div key={ri} className={`flex w-[787px] border-x-2 border-t-2 border-black ${rowHeight[r.h]}`}>
            <div className="ml-[62px] w-[2px] bg-black" />
          </div>
        )
      )}
      <div className="absolute left-[70px] top-[310px] h-[331px] w-[954px] border-[5px] border-[#ee1c25]" />
    </div>
  );
}

function Workspace() {
  return (
    <div className="flex min-w-0 flex-1 pl-[3px]">
      <div className="flex w-[1577px] flex-col">
        <div className="flex h-[30px] items-start gap-[2px] pt-[2px]">
          <svg className="ml-[15px] mr-[16px] mt-[5px]" width="14" height="13" viewBox="0 0 14 13"><path d="M7 0l7 6.500h-2V13H8.500V9h-3v4H2V6.500H0zM10 .5h2V4l-2-2z" fill="#7a7a7a" /></svg>
          <Tab label="3-[GIPAM-...프로토콜" active />
          <Tab label="08. GIPAM2200_DG" />
          <Tab label="GIPAM2200 M...T 상세" />
          <svg className="ml-[6px] mt-[8px]" width="12" height="12" viewBox="0 0 12 12"><path d="M6 0v12M0 6h12" stroke="#777" strokeWidth="2" /></svg>
        </div>
        <div className="flex min-h-0 flex-1 border-t border-[#df4a48] bg-[#d9d9d9]">
          <div className="w-[185px]" />
          <DocPage />
          <div className="ml-auto flex w-[17px] flex-col items-center border-x border-[#e5e5e5] bg-[#fbfbfb] pb-[7px] pt-[5px]">
            <ScrollArrow up />
            <div className="my-[7px] w-[9px] flex-1 rounded-full bg-[#e0e0e0] pt-[413px]">
              <div className="h-[40px] w-[9px] rounded-full bg-[#b2b2b2]" />
            </div>
            <ScrollArrow />
          </div>
        </div>
      </div>
      <svg className="ml-[12px] mt-[15px]" width="16" height="16" viewBox="0 0 16 16">
        <circle cx="8" cy="8" r="4.500" fill="none" stroke="#b3b3b3" strokeWidth="3.500" />
        <path d="M4.500 1.900L6 4.500M11.500 1.900L10 4.500M0 8h3M16 8h-3M4.500 14.100L6 11.500M11.500 14.100L10 11.500" stroke="#b3b3b3" strokeWidth="3.500" />
      </svg>
    </div>
  );
}

/* ---------- status bar and taskbar ---------- */

function StatusBar() {
  return (
    <div className="flex h-[23px] items-center bg-[#df4a48] text-white">
      <span className="ml-[13px] w-[134px] text-[11.5px] leading-[22px]">검색</span>
      <svg width="76" height="12" viewBox="0 0 76 12">
        <circle cx="4" cy="4" r="3.300" fill="none" stroke="#fff" strokeWidth="1.300" /><path d="M6.500 6.500l4.500 5" stroke="#fff" strokeWidth="2" />
        <path d="M20 9h10.500L25 3z" fill="#fff" />
        <path d="M42 6.500h10L47 1.500zM45 6h4v4h-4zM64 5.500h10L69 10.500zM67 2h4v4h-4z" fill="#f0a09e" />
      </svg>
      <svg className="ml-[670px]" width="26" height="12" viewBox="0 0 26 12"><path d="M0 1h1.500v10H0zM9 1v10L2.500 6zM26 1v10L20 6z" fill="#fff" /></svg>
      <div className="ml-[13px] h-[21px] w-[38px] bg-white text-center text-[11.5px] leading-[18px] text-black">6</div>
      <span className="ml-[5px] w-[34px] whitespace-pre text-[11.5px] leading-[21px] text-[#ffe6e4]">/ 10</span>
      <svg width="28" height="12" viewBox="0 0 28 12"><path d="M0 1l6 5-6 5zM18 1l6.500 5-6.500 5zM25 1h1.500v10H25z" fill="#fff" /></svg>
      <svg className="ml-auto" width="64" height="14" viewBox="0 0 64 14" fill="none" stroke="#fff">
        <path d="M.5.500h12v12H.5zM25.500.500h12v12h-12z" />
        <path d="M31.500 2v3M31.500 8v3M27 6.500h3M33 6.500h3" strokeWidth="1.600" />
        <path d="M52.500 2.500h8v8h-8zM50.500 3V.5H53M60 .5h2.500V3M62.500 10v2.500H60M53 12.500h-2.500V10" />
      </svg>
      <svg className="ml-[39px]" width="118" height="16" viewBox="0 0 118 16">
        <path d="M0 7h10v2H0zM106 7h10v2h-10zM110 3h2v10h-2z" fill="#fff" />
        <path d="M20 8.500h76M56.500 4v8" stroke="#f6b9b7" />
        <path d="M63 1h7v12l-2 3h-3l-2-3z" fill="#fff" />
      </svg>
      <span className="ml-[17px] w-[38px] text-[11.5px] leading-[22px] tracking-[-0.300px] text-[#fff0e8]">150%</span>
      <svg className="mr-[25px]" width="8" height="5" viewBox="0 0 8 5"><path d="M0 0h7.500L3.700 4.500z" fill="#fff" /></svg>
    </div>
  );
}

const TaskButton = ({ m, w, c }: { m: string; w: string; c: string }) => (
  <div className={`${m} ${w} flex justify-center rounded-t-[2px] border border-b-0 border-[#e8d8c0] bg-[#a8937c] pt-[3px]`}>
    <div className={`${c} h-[5px] w-[24px] rounded-t-[3px]`} />
  </div>
);

function Taskbar() {
  return (
    <div className="flex h-[8px] overflow-hidden border-t border-[#3a1c0c] bg-gradient-to-r from-[#94673a] via-[#b87938] to-[#6b4517]">
      <div className="ml-[13px] mt-px h-[20px] w-[29px] rounded-t-full border border-[#f1f1f1] bg-[#8ca6bc]" />
      <div className="ml-[42px] mt-[2px] h-[6px] w-[18px] -skew-x-[30deg] bg-[#edc83c]" />
      <TaskButton m="ml-[20px]" w="w-[58px]" c="bg-[#cbb27c]" />
      <div className="ml-[24px] mt-[3px] h-[18px] w-[20px] rounded-full bg-[#d84a3c]" />
      <div className="ml-[100px] mt-[2px] h-[6px] w-[24px] bg-[#d9d9d4]" />
      <TaskButton m="ml-[144px]" w="w-[58px]" c="bg-[#cc6a3c]" />
      <TaskButton m="ml-[4px]" w="w-[58px]" c="bg-[#7b6a5c]" />
      <div className="ml-[22px] mt-[3px] h-[18px] w-[18px] rounded-full border-2 border-[#e33] bg-white" />
      <div className="ml-[42px] mt-[2px] h-[6px] w-[18px] -skew-x-[30deg] bg-[#2c4c9c]" />
      <TaskButton m="ml-[28px]" w="w-[58px]" c="bg-[#1e7a44]" />
      <TaskButton m="ml-[4px]" w="w-[58px]" c="bg-[#d8502c]" />
      <TaskButton m="ml-[4px]" w="w-[58px]" c="bg-[#f1f1f1]" />
      <TaskButton m="ml-[4px]" w="w-[58px]" c="bg-[#3b5f96]" />
      <div className="h-full flex-1 border-t border-[#c89058] bg-gradient-to-r from-[#7a4a28] via-[#a8741c] to-[#6b4517]" />
      <div className="w-[14px] border border-[#c9c0b4] bg-[#7a6b58]" />
    </div>
  );
}

export default function App() {
  return (
    <div className={`${UI} flex h-[1048px] w-[1920px] flex-col overflow-hidden bg-white`}>
      <Header />
      <Ribbon />
      <div className="flex min-h-0 flex-1">
        <Rail />
        <SidePanel />
        <Workspace />
      </div>
      <StatusBar />
      <Taskbar />
    </div>
  );
}
